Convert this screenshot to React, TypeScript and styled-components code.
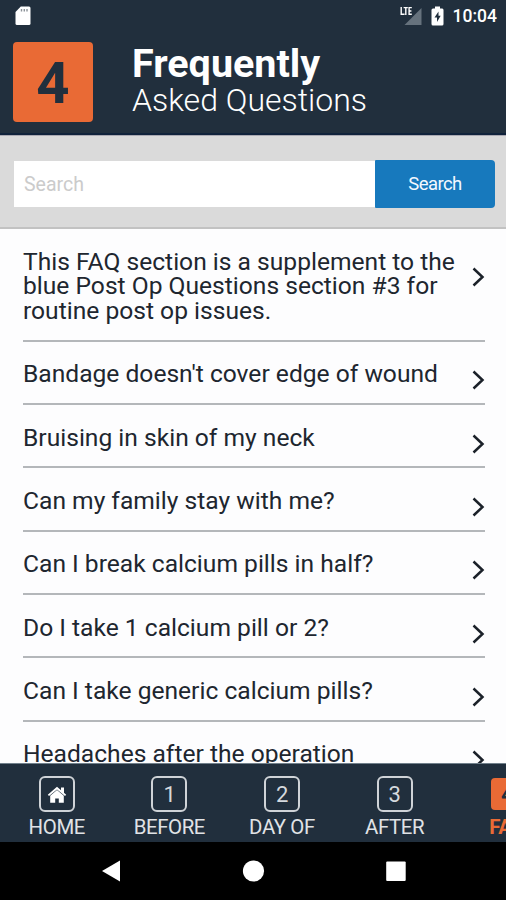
import React from "react";
import styled, { createGlobalStyle } from "styled-components";

const navy = "#212f3d";
const orange = "#e96a35";

const GlobalStyle = createGlobalStyle`
  * { box-sizing: border-box; }
  body { margin: 0; overflow: hidden; font-family: Roboto, "Liberation Sans", sans-serif; }
  button, input { font-family: inherit; border: 0; margin: 0; padding: 0; outline: 0; }
`;

const Screen = styled.div`
  width: 506px;
  height: 900px;
  display: flex;
  flex-direction: column;
  overflow: hidden;
  background: #fdfdfe;
`;

const StatusBar = styled.div`
  height: 32px;
  flex: none;
  display: flex;
  align-items: center;
  padding: 0 9px 0 15px;
  background: ${navy};
  color: #fff;
`;

const StatusIcons = styled.div`
  margin-left: auto;
  display: flex;
  align-items: center;
  gap: 9px;
`;

const Clock = styled.span`
  font-size: 17.5px;
  font-weight: 500;
  line-height: 32px;
`;

const Header = styled.header`
  height: 103px;
  flex: none;
  display: flex;
  padding: 10px 0 0 13px;
  background: ${navy};
  border-bottom: 2px solid #10223b;
  color: #fff;
`;

const HeaderNumber = styled.div`
  width: 80px;
  height: 80px;
  border-radius: 4px;
  background: ${orange};
  color: ${navy};
  font-size: 58px;
  font-weight: 700;
  line-height: 82px;
  text-align: center;
`;

const Title = styled.h1`
  margin: 3px 0 0 39px;
  font-size: 39.5px;
  line-height: 38px;
  font-weight: 700;
`;

const Subtitle = styled.span`
  display: block;
  font-size: 32px;
  line-height: 34px;
  font-weight: 300;
`;

const SearchBar = styled.form`
  height: 94px;
  flex: none;
  display: flex;
  align-items: center;
  padding: 4px 11px 0 14px;
  background: #dadada;
  border-top: 1px solid #aaa9b2;
  border-bottom: 2px solid #c2c2c2;
`;

const SearchField = styled.input`
  && {
    width: 361px;
    height: 46px;
    padding: 2px 0 0 10px;
    background: #fff;
    color: #222;
    font-size: 19.5px;
  }
  &::placeholder {
    color: #cbcbcb;
    opacity: 1;
  }
`;

const SearchButton = styled.button`
  width: 120px;
  height: 48px;
  border-radius: 1px 4px 4px 1px;
  background: #1779bd;
  color: #f3f8ff;
  font-size: 18.5px;
  letter-spacing: -0.55px;
`;

const List = styled.ul`
  flex: 1;
  min-height: 0;
  overflow: hidden;
  margin: 0;
  padding: 0 21px 0 23px;
  list-style: none;
`;

const Row = styled.li<{ $tall?: boolean }>`
  height: ${(p) => (p.$tall ? 112.7 : 63.35)}px;
  display: flex;
  justify-content: space-between;
  padding-top: 20.5px;
  border-bottom: 2px solid #b4b7ba;
  color: #20262f;
  font-size: 24.6px;
  line-height: 24.7px;
`;

const Question = styled.span`
  white-space: pre;
`;

const Chevron = styled.svg<{ $top: number }>`
  flex: none;
  width: 14px;
  height: 20px;
  margin-top: ${(p) => p.$top}px;
`;

const Tabs = styled.nav`
  height: 79px;
  flex: none;
  display: flex;
  overflow: hidden;
  padding-left: 0.5px;
  background: ${navy};
  border-top: 1px solid #71808b;
`;

const Tab = styled.div<{ $active?: boolean }>`
  flex: none;
  width: 112.6px;
  display: flex;
  flex-direction: column;
  align-items: center;
  padding-top: 12px;
  color: ${(p) => (p.$active ? orange : "#e0e3e6")};
  font-size: 20.4px;
  letter-spacing: -0.4px;
  font-weight: ${(p) => (p.$active ? 700 : 400)};
  line-height: 24px;
`;

const TabIcon = styled.div<{ $active?: boolean }>`
  width: 36px;
  height: 36px;
  margin-bottom: 3px;
  padding-top: 1px;
  display: flex;
  align-items: center;
  justify-content: center;
  border: 2px solid ${(p) => (p.$active ? navy : "#cfd3d7")};
  border-radius: 6px;
  background: ${(p) => (p.$active ? orange : navy)};
  color: ${(p) => (p.$active ? navy : "#d5d9dd")};
  font-size: 22px;
`;

const SystemNav = styled.div`
  height: 58px;
  flex: none;
  display: flex;
  align-items: center;
  justify-content: center;
  background: #000;
`;

const NavIcon = styled.svg`
  width: 142.5px;
  height: 22px;
  fill: #fff;
`;

const questions = [
  "This FAQ section is a supplement to the\nblue Post Op Questions section #3 for\nroutine post op issues.",
  "Bandage doesn't cover edge of wound",
  "Bruising in skin of my neck",
  "Can my family stay with me?",
  "Can I break calcium pills in half?",
  "Do I take 1 calcium pill or 2?",
  "Can I take generic calcium pills?",
  "Headaches after the operation",
];

const HomeIcon = () => (
  <svg width="20" height="18" viewBox="0 0 20 18" fill="#fff">
    <path d="M10 0.8 19.2 8.8 18 10 10 3.4 2 10 0.8 8.8ZM14 1.5h3v5.5l-3-2.5Z" />
    <path d="M10 4.1 16.8 9.8V16.8H11.8V12.4H8.2v4.4H3.2V9.8Z" />
  </svg>
);

const tabs: { label: string; icon: React.ReactNode; active?: boolean }[] = [
  { label: "HOME", icon: <HomeIcon /> },
  { label: "BEFORE", icon: "1" },
  { label: "DAY OF", icon: "2" },
  { label: "AFTER", icon: "3" },
  { label: "FAQ", icon: "4", active: true },
];

export default function App() {
  return (
    <Screen>
      <GlobalStyle />
      <StatusBar>
        <svg width="16" height="20" viewBox="0 0 16 20">
          <path d="M5.8 0.5H14Q15.5 0.5 15.5 2V17.5Q15.5 19 14 19H2Q0.5 19 0.5 17.5V6Z" fill="#fff" />
          <path d="M6.5 3v2.5M9.3 3v2.5M12 3v2.5" stroke="#8b9298" strokeWidth="1.4" />
        </svg>
        <StatusIcons>
          <svg width="23" height="20" viewBox="0 0 23 20">
            <path d="M22.5 2V19H5.5Z" fill="#66727d" />
            <path d="M2.2 1V8.2H5.6M4.6 1.6H8.8M6.8 1.6V9M12.8 1.6H10.1V8.3H12.8M10.1 5H12.4" fill="none" stroke="#fff" strokeWidth="1.4" />
          </svg>
          <svg width="13" height="20" viewBox="0 0 13 20">
            <path d="M4 0.5h5v2h2.2Q12.5 2.5 12.5 4V18Q12.5 19.5 11 19.5H2Q0.5 19.5 0.5 18V4Q0.5 2.5 2 2.5H4Z" fill="#fff" />
            <path d="M7.5 5.5 3.5 11.5H6V16L9.7 9.8H7.5Z" fill={navy} />
          </svg>
          <Clock>10:04</Clock>
        </StatusIcons>
      </StatusBar>
      <Header>
        <HeaderNumber>4</HeaderNumber>
        <Title>
          Frequently
          <Subtitle>Asked Questions</Subtitle>
        </Title>
      </Header>
      <SearchBar onSubmit={(e) => e.preventDefault()}>
        <SearchField placeholder="Search" />
        <SearchButton>Search</SearchButton>
      </SearchBar>
      <List>
        {questions.map((text, i) => (
          <Row key={text} $tall={i === 0}>
            <Question>{text}</Question>
            <Chevron $top={i === 0 ? 17.5 : 8} viewBox="0 0 14 20">
              <path d="M2.5 1.5 11.5 10 2.5 18.5" fill="none" stroke="#1b2129" strokeWidth="2.5" />
            </Chevron>
          </Row>
        ))}
      </List>
      <Tabs>
        {tabs.map((t) => (
          <Tab key={t.label} $active={t.active}>
            <TabIcon $active={t.active}>{t.icon}</TabIcon>
            {t.label}
          </Tab>
        ))}
      </Tabs>
      <SystemNav>
        <NavIcon viewBox="0 0 142.5 22"><path d="M81 0.5V21.5L63 11Z" /></NavIcon>
        <NavIcon viewBox="0 0 142.5 22"><circle cx="71.5" cy="11" r="10.6" /></NavIcon>
        <NavIcon viewBox="0 0 142.5 22"><rect x="62.2" y="1.5" width="19.5" height="19.5" rx="1" /></NavIcon>
      </SystemNav>
    </Screen>
  );
}
